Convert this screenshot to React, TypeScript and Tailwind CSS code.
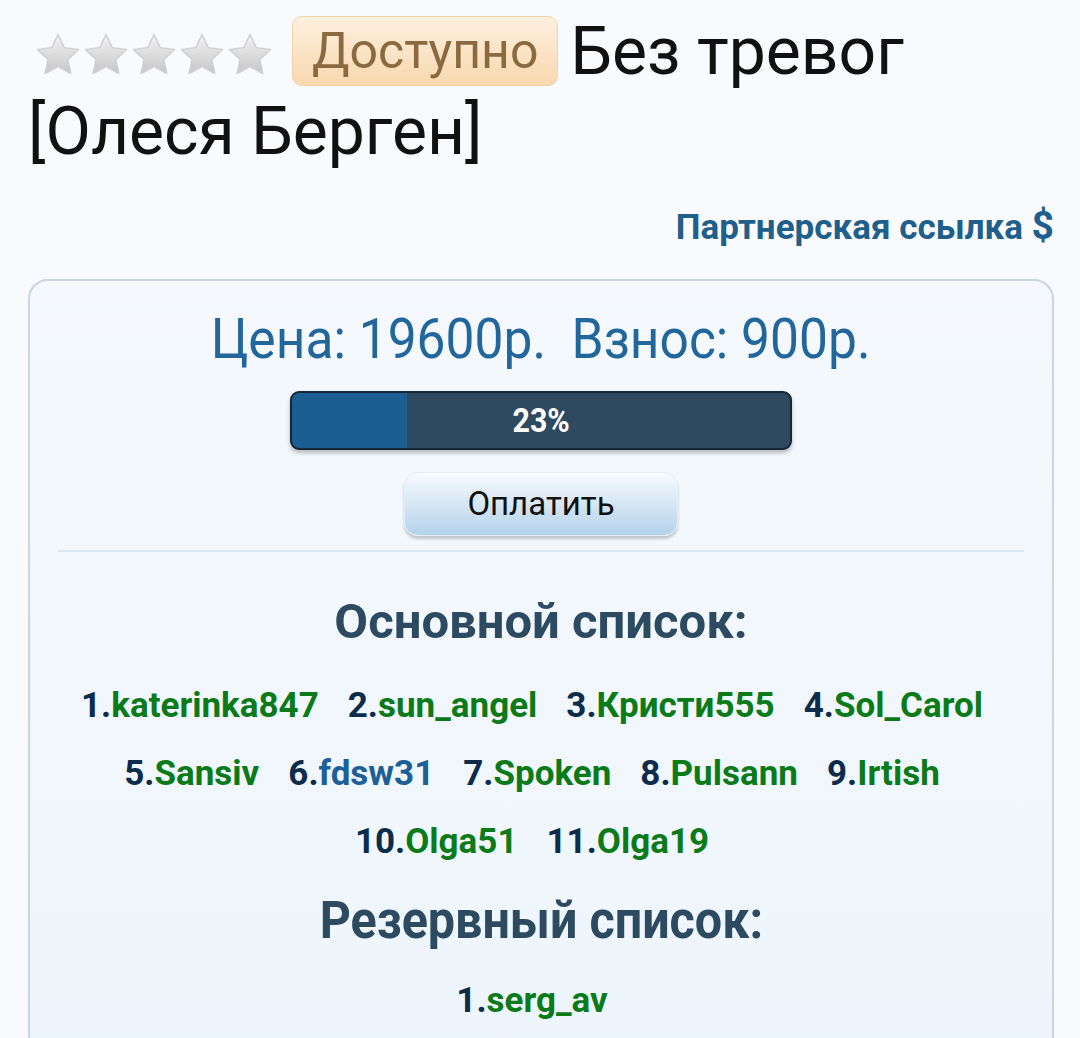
import React from "react";

const font = { fontFamily: "Roboto, 'Noto Sans', sans-serif" };

function Star() {
  return (
    <svg width="48" height="46" viewBox="0 0 24 23">
      <defs>
        <linearGradient id="sg" x1="0" y1="0" x2="0" y2="1">
          <stop offset="0" stopColor="#f2f2f2" />
          <stop offset="1" stopColor="#c6c6c6" />
        </linearGradient>
      </defs>
      <path
        d="M12 1.2l3.1 6.6 7.2.9-5.3 5 1.4 7.1L12 17.3l-6.4 3.5 1.4-7.1-5.3-5 7.2-.9z"
        fill="url(#sg)"
        stroke="#d0d0d0"
        strokeWidth="0.7"
        strokeLinejoin="round"
      />
    </svg>
  );
}

const mainList: [string, string][] = [
  ["1.", "katerinka847"],
  ["2.", "sun_angel"],
  ["3.", "Кристи555"],
  ["4.", "Sol_Carol"],
  ["5.", "Sansiv"],
  ["6.", "fdsw31"],
  ["7.", "Spoken"],
  ["8.", "Pulsann"],
  ["9.", "Irtish"],
  ["10.", "Olga51"],
  ["11.", "Olga19"],
];

export default function App() {
  return (
    <main
      className="min-h-[1038px] bg-[#f9fafe] pl-[28px] pr-[26px] pt-[12px] overflow-hidden"
      style={font}
    >
      {/* title: rating, status badge, course name */}
      <h1 className="text-[66px] leading-[80px] text-[#111] font-normal">
        <span className="inline-flex align-[-4px] mr-[18px] ml-[6px]">
          <Star />
          <Star />
          <Star />
          <Star />
          <Star />
        </span>
        <span className="inline-block rounded-[10px] border border-[#f0d3a8] bg-gradient-to-b from-[#fdf0df] to-[#f8d8ae] px-[19px] text-[50px] leading-[68px] text-[#8a6a3e] align-[6px] mr-[12px]">
          Доступно
        </span>
        <span>Без тревог</span> <span>[Олеся Берген]</span>
      </h1>

      {/* partner link */}
      <div className="mt-[33px] flex justify-end">
        <a className="text-[35px] leading-[42px] font-bold text-[#1f5f8b]">
          Партнерская ссылка <span className="text-[39px]">$</span>
        </a>
      </div>

      {/* card */}
      <section className="mt-[30px] rounded-[20px] border-2 border-[#c9d5e1] bg-gradient-to-b from-[#f5f9fd] to-[#edf5fc] px-[24px] pt-[26px] pb-[40px]">
        <div className="text-center">
          <span className="inline-block origin-center scale-x-[0.92] text-[56px] leading-[64px] text-[#22679c] whitespace-nowrap">
            Цена: 19600р.&nbsp;&nbsp;Взнос: 900р.
          </span>
        </div>

        <div className="mx-auto mt-[20px] w-[502px] h-[59px] rounded-[9px] border-2 border-[#152636] bg-[#2d4a60] shadow-[0_3px_4px_rgba(0,0,0,0.25)] relative overflow-hidden">
          <div className="h-full w-[23%] bg-[#1b5f92] rounded-l-[7px]" />
          <div className="absolute inset-0 flex items-center justify-center">
            <span className="inline-block scale-x-[0.92] text-[33px] font-bold text-white">23%</span>
          </div>
        </div>

        <div className="flex justify-center mt-[22px]">
          <button className="w-[274px] h-[64px] rounded-[14px] border border-[#e5eef6] bg-gradient-to-b from-[#f8fbfe] to-[#b4d2ea] shadow-[0_3px_3px_rgba(0,0,0,0.2)]">
            <span className="inline-block text-[33px] text-[#111]">Оплатить</span>
          </button>
        </div>

        <div className="mt-[14px] mx-[4px] h-[2px] bg-[#dae8f4]" />

        <h2 className="mt-[44px] text-center text-[49px] leading-[52px] font-bold text-[#2c4a60]">
          Основной список:
        </h2>

        <div className="mt-[33px] pr-[18px] flex flex-wrap justify-center gap-x-[29px] gap-y-[18px] text-[35px] leading-[50px] font-bold">
          {mainList.map(([n, name]) => (
            <span key={n} className="whitespace-nowrap">
              <span className="text-[#0d2b4b]">{n}</span>
              <span className={name === "fdsw31" ? "text-[#1d6098]" : "text-[#0b7a18]"}>
                {name}
              </span>
            </span>
          ))}
        </div>

        <h2 className="mt-[26px] text-center">
          <span className="inline-block scale-x-[0.95] text-[51px] leading-[56px] font-bold text-[#2c4a60]">
            Резервный список:
          </span>
        </h2>

        <div className="mt-[26px] pr-[18px] text-center">
          <span className="inline-block text-[35px] font-bold">
            <span className="text-[#0d2b4b]">1.</span>
            <span className="text-[#0b7a18]">serg_av</span>
          </span>
        </div>
      </section>
    </main>
  );
}
